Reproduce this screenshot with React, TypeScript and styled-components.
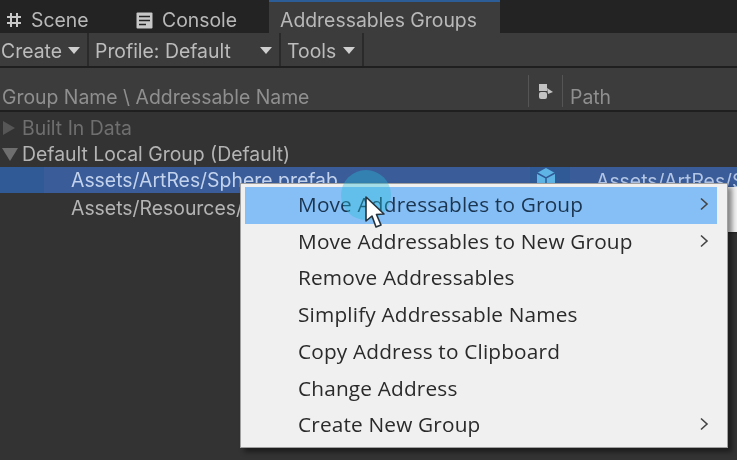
import React from 'react';
import styled, { createGlobalStyle } from 'styled-components';

const GlobalStyle = createGlobalStyle`
  html, body {
    margin: 0;
    padding: 0;
    background: #333333;
  }
`;

const Page = styled.div`
  position: relative;
  width: 737px;
  height: 460px;
  overflow: hidden;
  background: #333333;
  color: #c8c8c8;
  font-family: Inter, Roboto, 'Liberation Sans', sans-serif;
  font-size: 19.4px;
  filter: blur(0.55px);
`;

// top tabs
const TabBar = styled.div`
  display: flex;
  height: 33px;
  background: #232323;
`;

const Tab = styled.div<{ $active?: boolean; $width: number }>`
  display: flex;
  align-items: center;
  gap: 9px;
  box-sizing: border-box;
  width: ${(p) => p.$width}px;
  padding: ${(p) => (p.$active ? '4px 0 0 11px' : '7px 0 0 6px')};
  background: ${(p) => (p.$active ? '#3c3c3c' : 'transparent')};
  border-top: ${(p) => (p.$active ? '2px solid #2c5d96' : 'none')};
  color: #b8b8b8;
  white-space: nowrap;
`;

// toolbar
const Toolbar = styled.div`
  display: flex;
  height: 33px;
  background: #3c3c3c;
  border-bottom: 2px solid #1f1f1f;
`;

const ToolButton = styled.div<{ $width: number; $lead: number }>`
  display: flex;
  align-items: center;
  justify-content: space-between;
  box-sizing: border-box;
  width: ${(p) => p.$width}px;
  padding: 2px 7px 0 ${(p) => p.$lead}px;
  border-right: 2px solid #2a2a2a;
  color: #bcbcbc;
  white-space: nowrap;
`;

const Caret = styled.span`
  width: 0;
  height: 0;
  border-left: 6px solid transparent;
  border-right: 6px solid transparent;
  border-top: 7px solid #cfcfcf;
`;

// column header
const ColumnHeader = styled.div`
  display: flex;
  align-items: flex-end;
  height: 42px;
  background: #3c3c3c;
  border-bottom: 2px solid #1f1f1f;
  color: #8f8f8f;
`;

const HeaderCell = styled.div<{ $width: number }>`
  display: flex;
  align-items: center;
  justify-content: center;
  box-sizing: border-box;
  width: ${(p) => p.$width}px;
  height: 32px;
  margin-bottom: 3px;
  border-right: 1px solid #555555;
  white-space: nowrap;
`;

const NameCell = styled(HeaderCell)`
  justify-content: flex-start;
  padding: 12px 0 0 2px;
`;

const PathCell = styled.div`
  padding: 0 0 1px 7px;
`;

// tree
const Tree = styled.div`
  padding-top: 3px;
`;

const Row = styled.div<{ $selected?: boolean; $dim?: boolean; $indent: number; $height?: number }>`
  display: flex;
  align-items: center;
  height: ${(p) => p.$height ?? 26}px;
  padding-left: ${(p) => p.$indent}px;
  background: ${(p) => (p.$selected ? '#3a5c98' : 'transparent')};
  color: ${(p) => (p.$selected ? '#c3d3ee' : p.$dim ? '#6f6f6f' : '#b4b4b4')};
  white-space: nowrap;
`;

const Twisty = styled.span<{ $open?: boolean }>`
  width: 0;
  height: 0;
  ${(p) =>
    p.$open
      ? `margin-right: 4px;
         border-left: 8px solid transparent;
         border-right: 8px solid transparent;
         border-top: 13px solid #6e6e6e;`
      : `margin-left: 3px;
         margin-right: 7px;
         border-top: 7px solid transparent;
         border-bottom: 7px solid transparent;
         border-left: 12px solid #565656;`}
`;

const SelectedBand = styled.span<{ $left: number; $width: number }>`
  position: absolute;
  left: ${(p) => p.$left}px;
  top: 167px;
  width: ${(p) => p.$width}px;
  height: 26px;
  background: #2f5a96;
`;

const AssetIcon = styled.svg`
  position: absolute;
  left: 535px;
  top: 167px;
`;

const AssetPath = styled.span`
  position: absolute;
  left: 596px;
  top: 169px;
  color: #b3c5e4;
  white-space: nowrap;
`;

// context menu
const Menu = styled.div`
  position: absolute;
  left: 240px;
  top: 183px;
  box-sizing: border-box;
  width: 488px;
  height: 265px;
  padding: 3px 10px 0 4px;
  background: #f0f0f0;
  border: 1px solid #a0a0a0;
  box-shadow: 4px 4px 5px rgba(0, 0, 0, 0.45);
  color: #2a2a2a;
  font-family: 'Open Sans', 'Noto Sans', sans-serif;
  font-size: 20.8px;
  letter-spacing: 0.17px;
`;

const MenuItem = styled.div<{ $active?: boolean }>`
  display: flex;
  align-items: center;
  justify-content: space-between;
  box-sizing: border-box;
  height: 36.75px;
  padding: 0 8px 3px 53px;
  background: ${(p) => (p.$active ? '#86bff5' : 'transparent')};
  color: ${(p) => (p.$active ? '#1b3550' : '#2a2a2a')};
  white-space: nowrap;
`;

const SubMenuEdge = styled.div`
  position: absolute;
  left: 720px;
  top: 187px;
  width: 17px;
  height: 45px;
  background: #f2f2f2;
  box-shadow: 0 1px 2px rgba(0, 0, 0, 0.3);
`;

const ClickRing = styled.div`
  position: absolute;
  left: 341px;
  top: 170px;
  width: 50px;
  height: 50px;
  border-radius: 50%;
  background: rgba(40, 190, 215, 0.38);
`;

const Cursor = styled.svg`
  position: absolute;
  left: 364px;
  top: 196px;
`;

const Chevron = () => (
  <svg width="10" height="14" viewBox="0 0 10 14">
    <path d="M2 1.5 L8 7 L2 12.5" fill="none" stroke="#444" strokeWidth="1.6" />
  </svg>
);

const items = [
  { label: 'Move Addressables to Group', sub: true, active: true },
  { label: 'Move Addressables to New Group', sub: true },
  { label: 'Remove Addressables' },
  { label: 'Simplify Addressable Names' },
  { label: 'Copy Address to Clipboard' },
  { label: 'Change Address' },
  { label: 'Create New Group', sub: true },
];

export default function App() {
  return (
    <Page>
      <GlobalStyle />
      <TabBar>
        <Tab $width={130}>
          <svg width="16" height="16" viewBox="0 0 16 16">
            <path d="M5 1 V15 M11 1 V15 M1 5 H15 M1 11 H15" stroke="#c8c8c8" strokeWidth="2" />
          </svg>
          Scene
        </Tab>
        <Tab $width={139}>
          <svg width="17" height="17" viewBox="0 0 17 17">
            <rect x="0.5" y="0.5" width="16" height="16" rx="1" fill="#c8c8c8" />
            <path d="M3 4.5 H14 M3 8.5 H14 M3 12.5 H10" stroke="#232323" strokeWidth="1.6" />
          </svg>
          Console
        </Tab>
        <Tab $active $width={231}>
          Addressables Groups
        </Tab>
      </TabBar>
      <Toolbar>
        <ToolButton $width={89} $lead={1}>
          Create
          <Caret />
        </ToolButton>
        <ToolButton $width={192} $lead={6}>
          Profile: Default
          <Caret />
        </ToolButton>
        <ToolButton $width={83} $lead={6}>
          Tools
          <Caret />
        </ToolButton>
      </Toolbar>
      <ColumnHeader>
        <NameCell $width={529}>Group Name \ Addressable Name</NameCell>
        <HeaderCell $width={34}>
          <svg width="16" height="17" viewBox="0 0 16 17">
            <rect x="1" y="1" width="8" height="7" fill="#c2c2c2" />
            <rect x="1" y="9" width="8" height="7" rx="2" fill="#c2c2c2" />
            <path d="M9 5 L15 9 L10 11 Z" fill="#c2c2c2" />
          </svg>
        </HeaderCell>
        <PathCell>Path</PathCell>
      </ColumnHeader>
      <Tree>
        <Row $dim $indent={0}>
          <Twisty />
          Built In Data
        </Row>
        <Row $indent={2}>
          <Twisty $open />
          Default Local Group (Default)
        </Row>
        <Row $selected $indent={71}>
          Assets/ArtRes/Sphere.prefab
        </Row>
        <Row $indent={71} $height={30}>
          Assets/Resources/Cube.prefab
        </Row>
      </Tree>
      <SelectedBand $left={0} $width={44} />
      <SelectedBand $left={530} $width={40} />
      <AssetIcon width="22" height="22" viewBox="0 0 22 22">
        <path d="M11 1 L20 6 V16 L11 21 L2 16 V6 Z" fill="#5fb4e6" />
        <path d="M2 6 L11 11 L20 6 M11 11 V21" fill="none" stroke="#2f5a96" strokeWidth="1.5" />
      </AssetIcon>
      <AssetPath>Assets/ArtRes/Sphere.prefab</AssetPath>
      <SubMenuEdge />
      <Menu>
        {items.map((item) => (
          <MenuItem key={item.label} $active={item.active}>
            {item.label}
            {item.sub && <Chevron />}
          </MenuItem>
        ))}
      </Menu>
      <ClickRing />
      <Cursor width="24" height="36" viewBox="0 0 24 36">
        <path
          d="M2 1 L2 25 L8 20 L12 31 L17 29 L12.5 18.5 L20 18 Z"
          fill="#ffffff"
          stroke="#26323c"
          strokeWidth="1.6"
          strokeLinejoin="round"
        />
      </Cursor>
    </Page>
  );
}
